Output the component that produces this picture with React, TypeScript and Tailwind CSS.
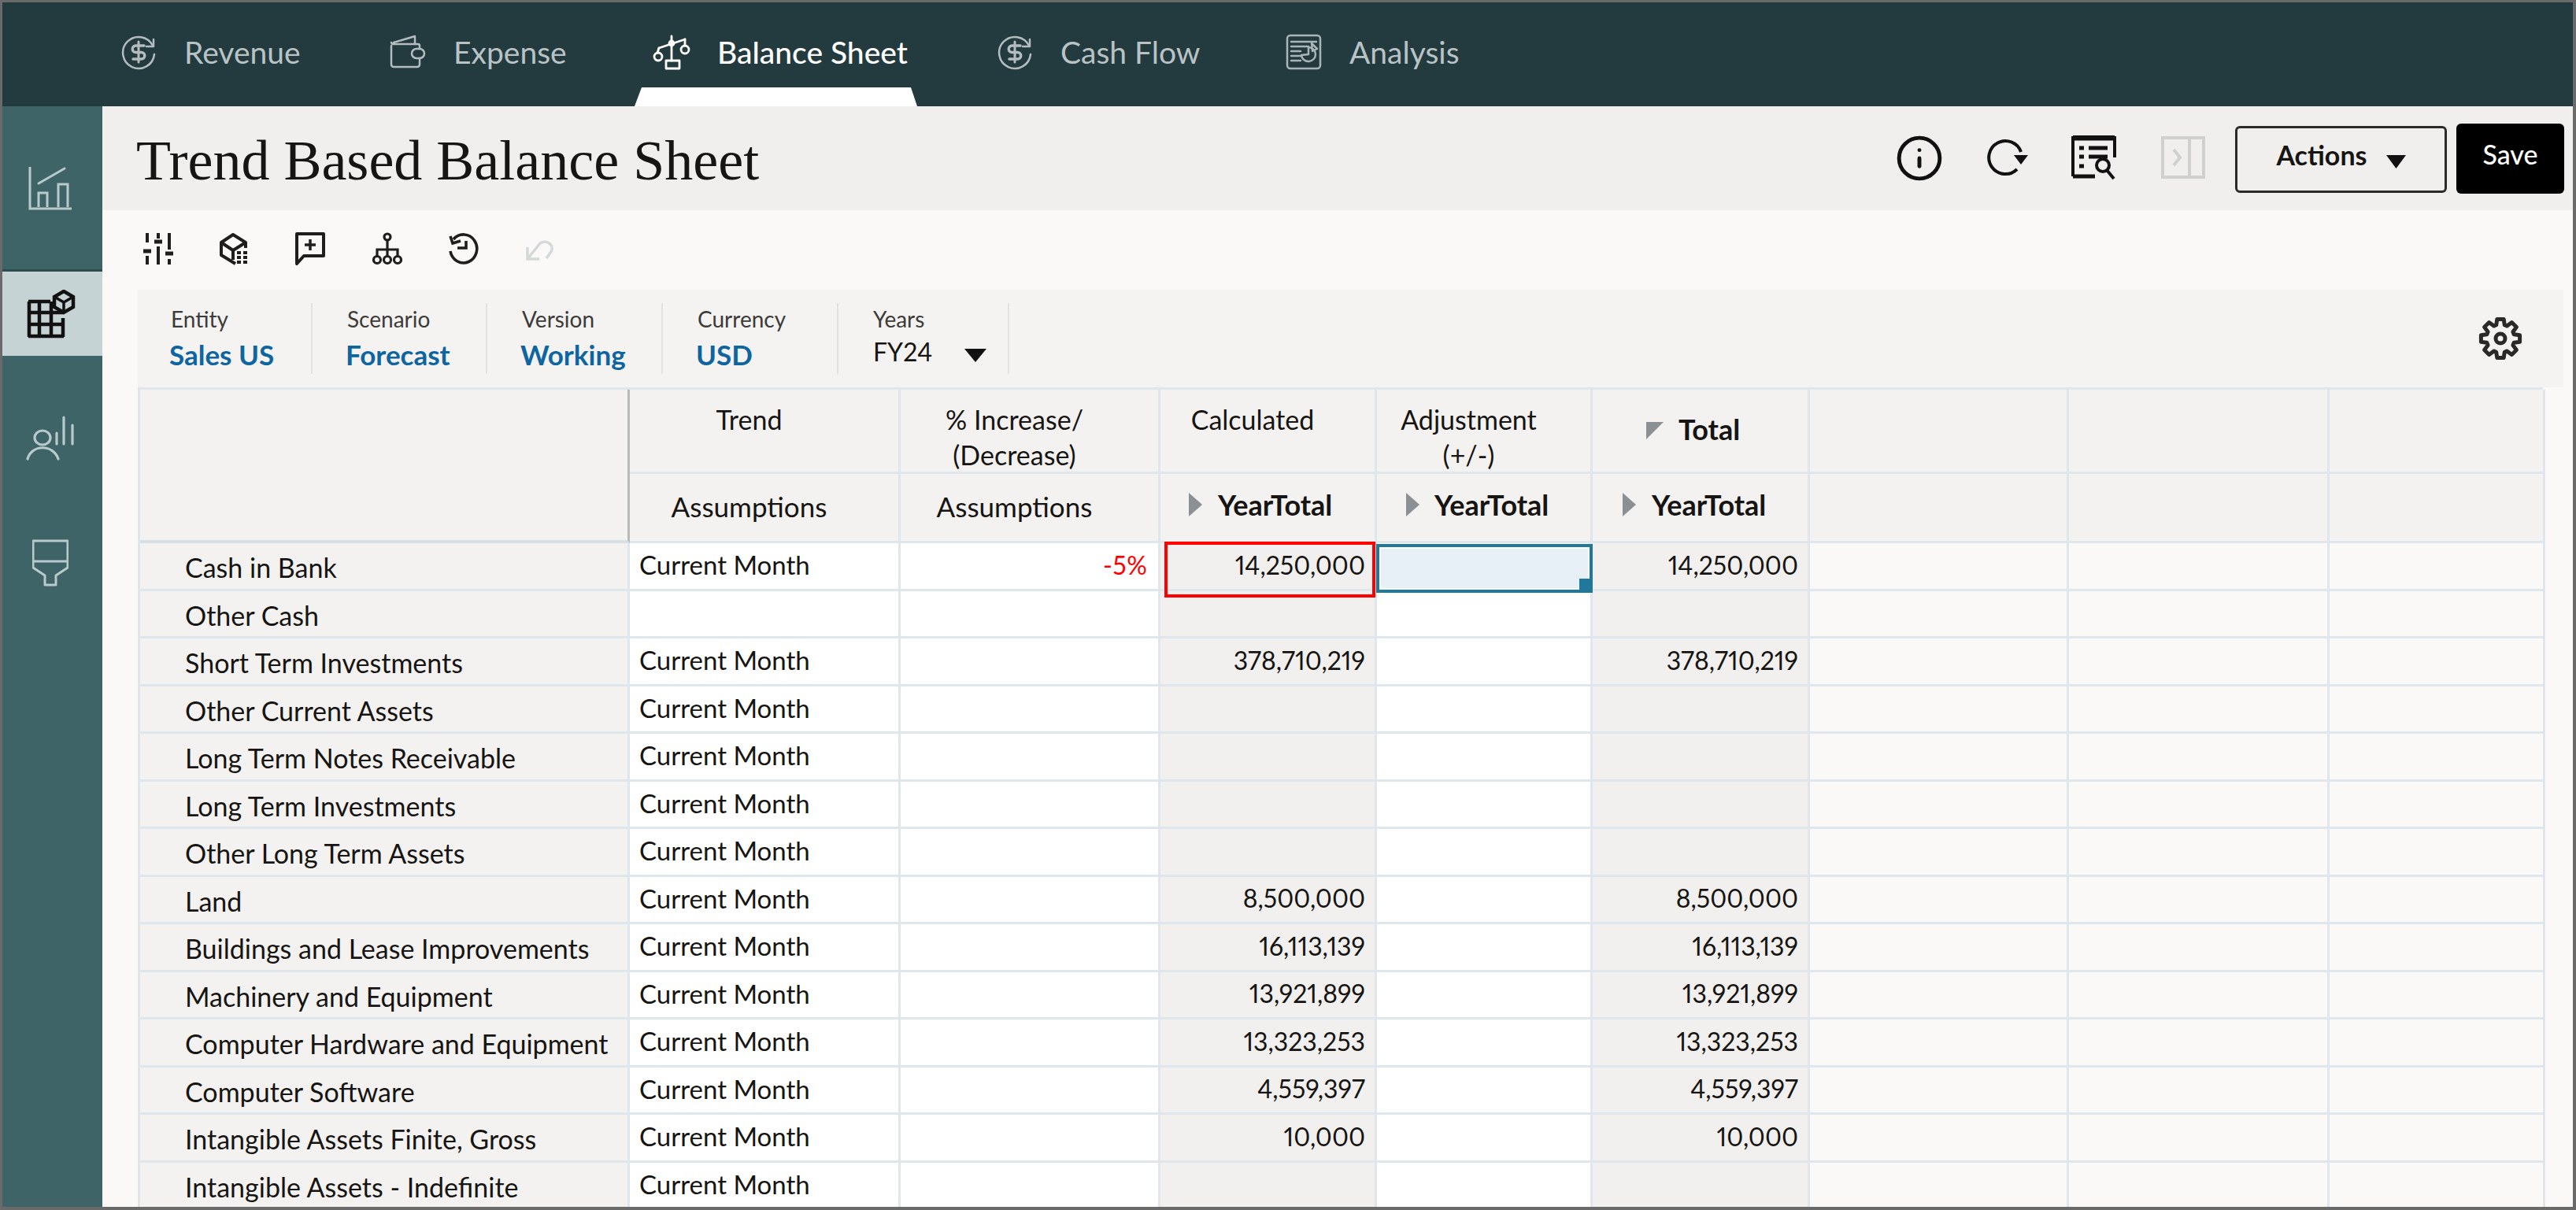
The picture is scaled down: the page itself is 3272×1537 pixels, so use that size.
import React from 'react';
import { Info } from 'lucide-react';

const sans = "font-['Lato','Noto_Sans',sans-serif]";

const DollarCycle = () => (
    <svg width="46" height="46" viewBox="0 0 46 46" fill="none" stroke="#b3bdbf" strokeWidth="2.5" strokeLinecap="round" strokeLinejoin="round">
        <path d="M41 15A20 20 0 1 0 43 26" />
        <path d="M42 7v9h-9" />
        <path d="M30 15H19.5a4 4 0 0 0 0 8.5h7a4 4 0 0 1 0 8.5H16" strokeWidth="3.5" />
        <path d="M23 10v26" strokeWidth="3" />
    </svg>
);

const Wallet = () => (
    <svg width="46" height="46" viewBox="0 0 46 46" fill="none" stroke="#b3bdbf" strokeWidth="2.5" strokeLinecap="round" strokeLinejoin="round">
        <path d="M2 15v24a3 3 0 0 0 3 3h30a3 3 0 0 0 3-3v-8" />
        <path d="M38 19v-4a2 2 0 0 0-2-2H5a3 3 0 0 1-3-2" />
        <path d="M5 11l27-8v10" />
        <rect x="28" y="19" width="16" height="12" rx="6" />
    </svg>
);

const Scale = () => (
    <svg width="50" height="46" viewBox="0 0 50 46" fill="none" stroke="#ffffff" strokeWidth="2.8" strokeLinecap="round" strokeLinejoin="round">
        <path d="M25 3v31" />
        <path d="M9 18L42 7" />
        <circle cx="25" cy="12" r="3" />
        <circle cx="8" cy="29" r="5" />
        <circle cx="42" cy="20" r="5" />
        <path d="M9 18l-2 6M42 7v8" />
        <rect x="18" y="34" width="17" height="10" />
    </svg>
);

const AnalysisIcon = () => (
    <svg width="46" height="46" viewBox="0 0 46 46" fill="none" stroke="#a9b5b7" strokeWidth="2.5" strokeLinecap="round" strokeLinejoin="round">
        <rect x="2" y="2" width="42" height="42" rx="4" />
        <path d="M7 10h32M7 16h22M7 22h12M7 28h12M7 34h12" />
        <path d="M29 17a9 9 0 1 1-9 10l9-1z" />
        <path d="M33 12l7 7-6 3z" />
    </svg>
);

// eight teeth, drawn around the centre of a 56 box
const gearPath = Array.from({ length: 8 }, (_, i) => {
    const a = (i * Math.PI) / 4;
    const pt = (r: number, d: number) =>
        `${(28 + r * Math.cos(a + d)).toFixed(1)} ${(28 + r * Math.sin(a + d)).toFixed(1)}`;
    return `${i === 0 ? 'M' : 'L'}${pt(18, -0.3)} L${pt(25, -0.17)} L${pt(25, 0.17)} L${pt(18, 0.3)}`;
}).join(' ') + ' Z';

const tabs = [
    { label: 'Revenue', icon: <DollarCycle />, w: 'w-[342px]', gap: 'gap-[35px]' },
    { label: 'Expense', icon: <Wallet />, w: 'w-[333px]', gap: 'gap-[35px]' },
    { label: 'Balance Sheet', icon: <Scale />, w: 'w-[438px]', gap: 'gap-[33px]', active: true },
    { label: 'Cash Flow', icon: <DollarCycle />, w: 'w-[367px]', gap: 'gap-[35px]' },
    { label: 'Analysis', icon: <AnalysisIcon />, w: 'w-[260px]', gap: 'gap-[35px]' },
];

const povs = [
    { label: 'Entity', value: 'Sales US', w: 'w-[222px]', pl: 'pl-[42px]' },
    { label: 'Scenario', value: 'Forecast', w: 'w-[222px]', pl: 'pl-[44px]' },
    { label: 'Version', value: 'Working', w: 'w-[223px]', pl: 'pl-[44px]' },
    { label: 'Currency', value: 'USD', w: 'w-[223px]', pl: 'pl-[44px]' },
];

const rows = [
    { label: 'Cash in Bank', trend: 'Current Month', pct: '-5%', calc: '14,250,000', total: '14,250,000' },
    { label: 'Other Cash', trend: '', pct: '', calc: '', total: '' },
    { label: 'Short Term Investments', trend: 'Current Month', pct: '', calc: '378,710,219', total: '378,710,219' },
    { label: 'Other Current Assets', trend: 'Current Month', pct: '', calc: '', total: '' },
    { label: 'Long Term Notes Receivable', trend: 'Current Month', pct: '', calc: '', total: '' },
    { label: 'Long Term Investments', trend: 'Current Month', pct: '', calc: '', total: '' },
    { label: 'Other Long Term Assets', trend: 'Current Month', pct: '', calc: '', total: '' },
    { label: 'Land', trend: 'Current Month', pct: '', calc: '8,500,000', total: '8,500,000' },
    { label: 'Buildings and Lease Improvements', trend: 'Current Month', pct: '', calc: '16,113,139', total: '16,113,139' },
    { label: 'Machinery and Equipment', trend: 'Current Month', pct: '', calc: '13,921,899', total: '13,921,899' },
    { label: 'Computer Hardware and Equipment', trend: 'Current Month', pct: '', calc: '13,323,253', total: '13,323,253' },
    { label: 'Computer Software', trend: 'Current Month', pct: '', calc: '4,559,397', total: '4,559,397' },
    { label: 'Intangible Assets Finite, Gross', trend: 'Current Month', pct: '', calc: '10,000', total: '10,000' },
    { label: 'Intangible Assets - Indefinite', trend: 'Current Month', pct: '', calc: '', total: '' },
];

const cell = 'border-r-[3px] border-b-[3px] border-[#dfe6ec]';
const headCell = `${cell} bg-[#f4f2f0] flex flex-col items-center pr-[38px] pt-[15px] text-[34px] leading-[45px] text-[#161513]`;
const numCell = `${cell} bg-[#f1f0ee] flex items-center justify-end pr-[12px] pb-[2px] text-[#161513] proportional-nums`;
const assumeCell = `${cell} bg-[#f4f2f0] flex justify-center items-center pr-[38px] pb-[2px] text-[35px] text-[#161513]`;

const Arrow = () => (
    <svg width="17" height="30" viewBox="0 0 17 30" className="shrink-0">
        <path d="M0 0L17 15L0 30Z" fill="#8b9094" />
    </svg>
);

const YearTotal = ({ pl, gap }: { pl: string; gap: string }) => (
    <div className={`${cell} bg-[#f4f2f0] flex items-center ${pl} ${gap} pb-[8px] text-[36px] font-bold text-[#161513]`}>
        <Arrow />
        <span>YearTotal</span>
    </div>
);

export default function App() {
    return (
        <div className={`${sans} w-[3272px] h-[1537px] overflow-hidden flex flex-col bg-[#fbf9f8] border-t-[3px] border-l-[3px] border-r-[4px] border-b-[4px] border-[#6a6a6a]`}>
            {/* Top tabs */}
            <div className="h-[132px] shrink-0 bg-[#233a3f] flex pl-[150px] pt-[38px] text-[39px] relative">
                {tabs.map((tab) => (
                    <div key={tab.label} className={`${tab.w} ${tab.gap} flex h-[50px] items-center ${tab.active ? 'text-white font-medium' : 'text-[#b9c3c5]'}`}>
                        <span className="shrink-0">{tab.icon}</span>
                        <span>{tab.label}</span>
                    </div>
                ))}
                <svg width="360" height="24" viewBox="0 0 360 24" className="absolute left-[803px] bottom-0">
                    <path d="M9 0H351L359 24H0Z" fill="#ffffff" />
                </svg>
            </div>

            <div className="flex-1 flex min-h-0">
                {/* Side nav */}
                <div className="w-[127px] shrink-0 bg-[#3f6468] flex flex-col">
                    <div className="h-[207px] flex items-center justify-center pr-[5px]">
                        <svg width="56" height="56" viewBox="0 0 56 56" fill="none" stroke="#b9cacc" strokeWidth="3">
                            <path d="M2 1V54H55" />
                            <path d="M13 52V34H24V52M38 52V23H50V52" />
                            <path d="M13 22L46 3" strokeLinecap="round" />
                        </svg>
                    </div>
                    <div className="h-[110px] bg-[#c6d3d5] border-t-[3px] border-[#2f4d51] flex items-center justify-center pr-[3px]">
                        <svg width="62" height="62" viewBox="0 0 62 62" fill="none" stroke="#111111" strokeWidth="4.5">
                            <path d="M2 15H30M2 29H47M2 44H47M2 59H47M3 15V60M16 15V60M31 15V60M46 36V60" />
                            <path d="M47 2L59 9V22L47 29L35 22V9Z" />
                            <path d="M35 9L47 16L59 9M47 16V29" strokeWidth="3.5" />
                        </svg>
                    </div>
                    <div className="h-[210px] flex items-center justify-center pr-[5px]">
                        <svg width="62" height="58" viewBox="0 0 62 58" fill="none" stroke="#b9cacc" strokeWidth="3.2" strokeLinecap="round">
                            <ellipse cx="21" cy="28" rx="10" ry="9" />
                            <path d="M2 55C7 36 35 36 41 55" />
                            <path d="M39 22V36M48 2V36M59 12V36" />
                        </svg>
                    </div>
                    <div className="h-[106px] flex items-center justify-center pr-[5px]">
                        <svg width="46" height="60" viewBox="0 0 46 60" fill="none" stroke="#b9cacc" strokeWidth="3" strokeLinejoin="round">
                            <path d="M1 2H45V36L30 46V58H16V46L1 36Z" />
                            <path d="M1 28H45" />
                        </svg>
                    </div>
                </div>

                {/* Main */}
                <div className="flex-1 flex flex-col min-w-0">
                    <div className="h-[132px] shrink-0 bg-[#f1efed] flex items-center pl-[43px] pr-[11px]">
                        <h1 className="flex-1 font-['Liberation_Serif',serif] text-[72px] leading-none text-[#161513] pt-[6px]">Trend Based Balance Sheet</h1>
                        <Info size={62} strokeWidth={1.9} color="#111111" />
                        <svg width="56" height="50" viewBox="0 0 56 50" fill="none" stroke="#111111" strokeWidth="4" className="ml-[52px] -mt-[2px]">
                            <path d="M41 40A21 21 0 1 1 46 18" />
                            <path d="M37 22H55L46 34Z" fill="#111111" stroke="none" />
                        </svg>
                        <svg width="58" height="56" viewBox="0 0 58 56" fill="none" stroke="#111111" className="ml-[54px] -mt-[2px]">
                            <path d="M2 52V3H55V28" strokeWidth="4" />
                            <path d="M2 3H55" strokeWidth="7" />
                            <path d="M2 52H30" strokeWidth="5" />
                            <path d="M10 16H16M22 16H46M10 27H16M22 27H46" strokeWidth="5" />
                            <path d="M10 39H16" strokeWidth="5" />
                            <circle cx="40" cy="38" r="8" strokeWidth="4" />
                            <path d="M45 44L54 55" strokeWidth="4" />
                        </svg>
                        <svg width="56" height="54" viewBox="0 0 56 54" fill="none" stroke="#d0d0ce" strokeWidth="4" className="ml-[56px] -mt-[2px]">
                            <rect x="2" y="2" width="52" height="50" />
                            <path d="M36 2V52" />
                            <path d="M16 17L24 27L16 37" />
                        </svg>
                        <button className="ml-[38px] mt-[2px] w-[269px] h-[85px] rounded-[6px] border-[3px] border-[#2b2a28] flex items-center justify-center gap-[24px] pb-[12px] text-[34px] font-bold text-[#161513]">
                            Actions
                            <svg width="25" height="17" viewBox="0 0 25 17" className="mt-[18px]">
                                <path d="M0 0H25L12.5 17Z" fill="#111111" />
                            </svg>
                        </button>
                        <button className="ml-[12px] w-[137px] h-[89px] rounded-[6px] bg-black text-white text-[34px] font-medium flex items-center justify-center pb-[12px]">
                            Save
                        </button>
                    </div>

                    {/* Toolbar */}
                    <div className="h-[101px] shrink-0 flex items-center pl-[52px] gap-[60px] pb-[4px]">
                        <svg width="38" height="42" viewBox="0 0 38 42" fill="none" stroke="#1f1e1c" strokeWidth="4">
                            <path d="M5 1V13M5 30V41M19 1V8M19 18V41M33 1V22M33 34V41" />
                            <path d="M0 24H10M14 12H24M28 27H38" strokeWidth="5" />
                        </svg>
                        <svg width="36" height="42" viewBox="0 0 36 42" fill="none" stroke="#1f1e1c" strokeWidth="4" strokeLinejoin="round" className="-ml-[1px]">
                            <path d="M20 40L2 29V13L17 3L33 13V20" />
                            <path d="M2 13L17 23L33 13M17 23V35" />
                            <path d="M22 26h5M30 26h5M22 32h5M30 32h5M22 38h5M30 38h5" strokeWidth="4" />
                        </svg>
                        <svg width="38" height="42" viewBox="0 0 38 42" fill="none" stroke="#1f1e1c" strokeWidth="4" strokeLinejoin="round">
                            <path d="M2 40V2H36V30H11Z" />
                            <path d="M19 9V23M12 16H26" strokeWidth="3.5" />
                        </svg>
                        <svg width="38" height="42" viewBox="0 0 38 42" fill="none" stroke="#1f1e1c" strokeWidth="3.2">
                            <circle cx="19" cy="6" r="4" />
                            <path d="M19 10V22M6 30V22H32V30M19 22V30" />
                            <circle cx="6" cy="35" r="4.5" />
                            <circle cx="19" cy="35" r="4.5" />
                            <circle cx="32" cy="35" r="4.5" />
                        </svg>
                        <svg width="38" height="42" viewBox="0 0 38 42" fill="none" stroke="#1f1e1c" strokeWidth="3.6" className="-ml-[1px]">
                            <path d="M6 9A17 18 0 1 1 2 24" />
                            <path d="M2 5L5 14L15 11" />
                            <path d="M22 11V20H11" />
                        </svg>
                        <svg width="36" height="34" viewBox="0 0 36 34" fill="none" stroke="#d5d8d9" strokeWidth="3.5" className="mt-[4px] -ml-[1px]">
                            <path d="M3 28L19 8C28 2 39 12 32 20L27 27" />
                            <path d="M3 13V28H18" />
                        </svg>
                    </div>

                    {/* POV bar */}
                    <div className="h-[124px] shrink-0 bg-[#f4f3f1] ml-[45px] mr-[12px] flex items-center">
                        {povs.map((pov) => (
                            <div key={pov.label} className={`${pov.w} ${pov.pl} h-[90px] border-r-2 border-[#e2e2e0] flex flex-col`}>
                                <span className="text-[28px] leading-[40px] text-[#3c3b39]">{pov.label}</span>
                                <span className="text-[35px] leading-[50px] font-bold text-[#0f659f] -ml-[2px]">{pov.value}</span>
                            </div>
                        ))}
                        <div className="w-[217px] pl-[44px] h-[90px] border-r-2 border-[#e2e2e0] flex flex-col">
                            <span className="text-[28px] leading-[40px] text-[#3c3b39]">Years</span>
                            <span className="flex items-center text-[32px] leading-[44px] text-[#161513]">
                                FY24
                                <svg width="28" height="17" viewBox="0 0 28 17" className="ml-[41px] mt-[8px]">
                                    <path d="M0 0H28L14 17Z" fill="#111111" />
                                </svg>
                            </span>
                        </div>
                        <div className="flex-1 flex justify-end pr-[52px]">
                            <svg width="56" height="56" viewBox="0 0 56 56" fill="none" stroke="#2a2927" strokeWidth="5" strokeLinejoin="round">
                                <path d={gearPath} />
                                <circle cx="28" cy="28" r="6" />
                            </svg>
                        </div>
                    </div>

                    {/* Grid */}
                    <div className="ml-[45px] flex-1 min-h-0 overflow-hidden">
                        <div className="grid grid-cols-[622px_344px_330px_275px_274px_276px_329px_331px_274px] grid-rows-[107px_88px] auto-rows-[60.5px] text-[32px] border-t-[3px] border-l-[3px] border-[#dfe6ec] w-[3055px]">
                            <div className="row-span-2 bg-[#f4f2f0] border-r-[3px] border-b-[4px] border-r-[#b9b9b7] border-b-[#d8e0e6]" />
                            <div className={headCell}>Trend</div>
                            <div className={headCell}>
                                <span>% Increase/</span>
                                <span>(Decrease)</span>
                            </div>
                            <div className={headCell}>Calculated</div>
                            <div className={headCell}>
                                <span>Adjustment</span>
                                <span>(+/-)</span>
                            </div>
                            <div className={`${cell} bg-[#f4f2f0] flex items-center pl-[68px] gap-[19px] pb-[4px] text-[36px] font-bold text-[#161513]`}>
                                <svg width="22" height="22" viewBox="0 0 22 22" className="shrink-0 mt-[4px]">
                                    <path d="M0 0H22L0 22Z" fill="#8b9094" />
                                </svg>
                                <span>Total</span>
                            </div>
                            <div className={`${cell} bg-[#f4f2f0]`} />
                            <div className={`${cell} bg-[#f4f2f0]`} />
                            <div className={`${cell} bg-[#f4f2f0]`} />

                            <div className={assumeCell}>Assumptions</div>
                            <div className={assumeCell}>Assumptions</div>
                            <YearTotal pl="pl-[36px]" gap="gap-[20px]" />
                            <YearTotal pl="pl-[37px]" gap="gap-[19px]" />
                            <YearTotal pl="pl-[38px]" gap="gap-[20px]" />
                            <div className={`${cell} bg-[#f4f2f0]`} />
                            <div className={`${cell} bg-[#f4f2f0]`} />
                            <div className={`${cell} bg-[#f4f2f0]`} />

                            {rows.map((row, i) => (
                                <React.Fragment key={row.label}>
                                    <div className={`${cell} bg-[#f4f2f0] flex items-center pl-[57px] pt-[4px] text-[34px] text-[#161513] whitespace-nowrap`}>{row.label}</div>
                                    <div className={`${cell} bg-white flex items-center pl-[12px] pb-[2px] text-[33px] text-[#161513]`}>{row.trend}</div>
                                    <div className={`${cell} bg-white flex items-center justify-end pr-[14px] pb-[2px] text-[#ff0000]`}>{row.pct}</div>
                                    <div className={`${numCell} relative`}>
                                        {row.calc}
                                        {i === 0 && <div className="absolute z-10 left-[5px] right-[-1px] top-[-2px] h-[71px] border-[4px] border-[#ff0000]" />}
                                    </div>
                                    <div className={`${cell} bg-white relative`}>
                                        {i === 0 && (
                                            <div className="absolute z-10 left-[-1px] -right-[3px] top-[1px] h-[62px] border-[4px] border-[#20799b] bg-[#e6f0f6] shadow-[inset_0_0_0_2px_#ffffff]">
                                                <div className="absolute right-0 bottom-0 w-[13px] h-[14px] bg-[#20799b]" />
                                            </div>
                                        )}
                                    </div>
                                    <div className={numCell}>{row.total}</div>
                                    <div className={cell} />
                                    <div className={cell} />
                                    <div className={cell} />
                                </React.Fragment>
                            ))}
                        </div>
                    </div>
                </div>
            </div>
        </div>
    );
}
